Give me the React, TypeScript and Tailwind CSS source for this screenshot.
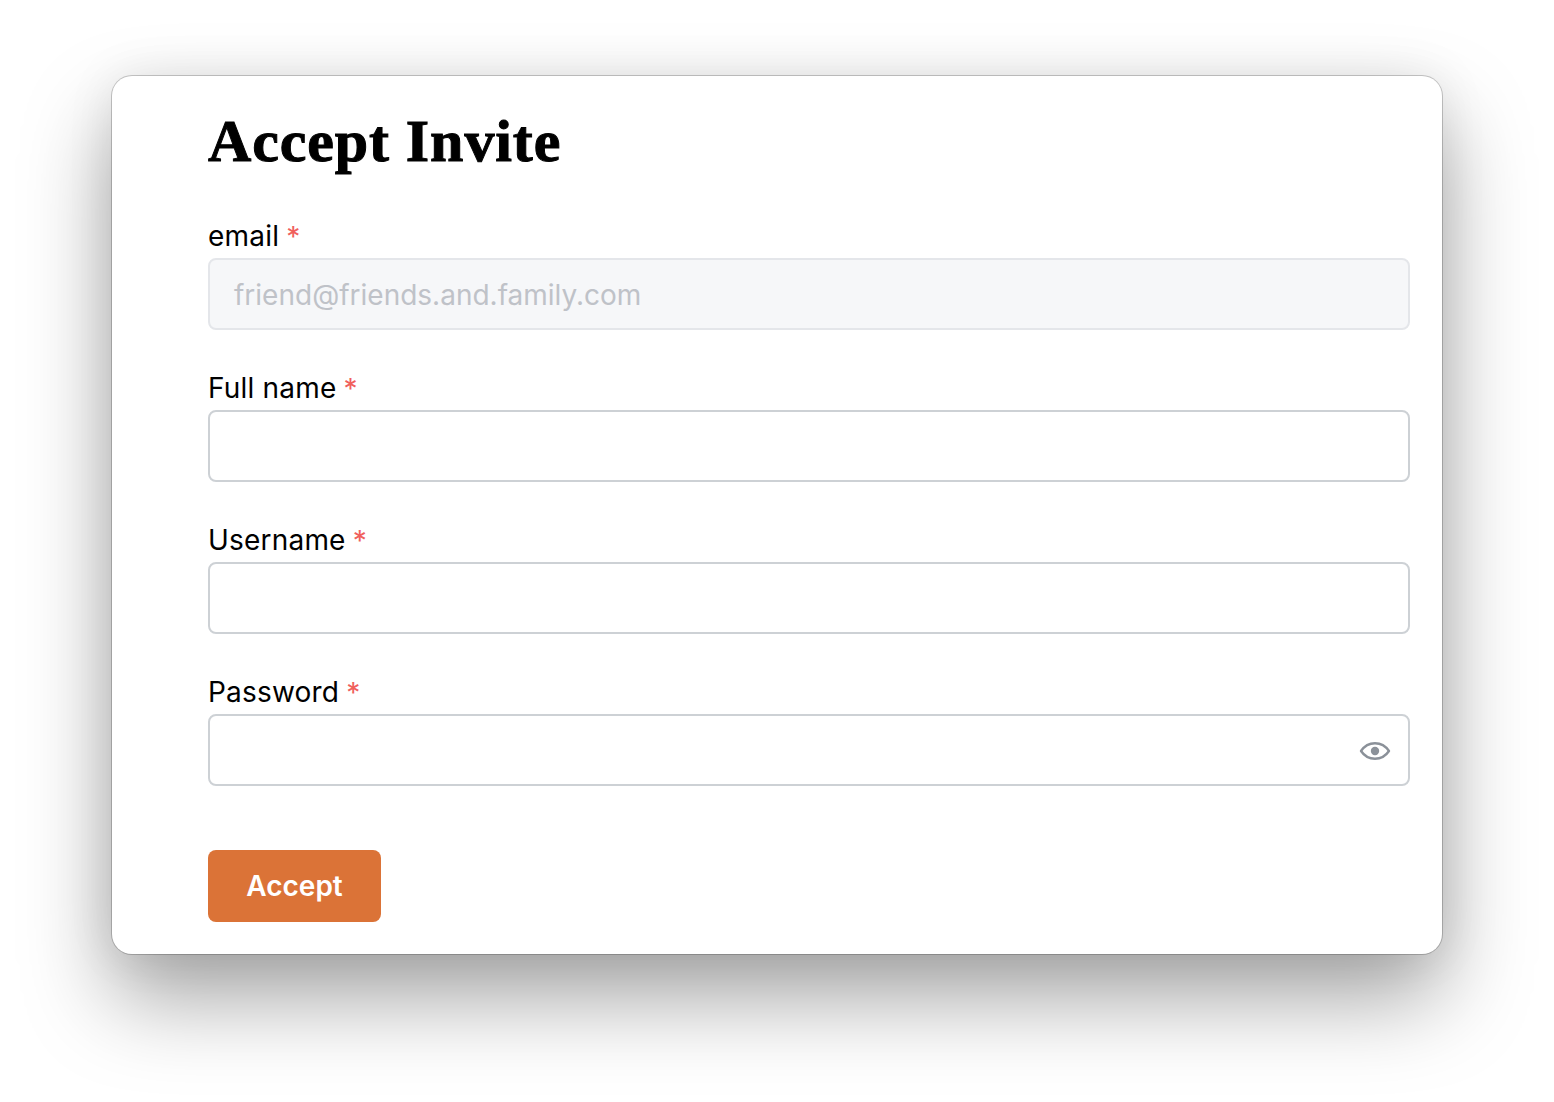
import React from "react";

function Field({ label, disabled, value, eye }: { label: string; disabled?: boolean; value?: string; eye?: boolean }) {
  return (
    <div className="flex flex-col">
      <div className="flex h-[34px] items-center text-[28px] leading-[34px] tracking-[0.2px] text-black">
        <span>{label}</span>
        <span className="ml-[7px] mt-[2px] text-[#f0605c]">*</span>
      </div>
      <div
        className={`relative mt-[5px] flex h-[72px] items-center rounded-[8px] border-2 px-[24px] ${
          disabled ? "border-[#e4e6ea] bg-[#f6f7f9]" : "border-[#cdd1d5] bg-white"
        }`}
      >
        <span className="pt-[2px] text-[28px] text-[#bfc2c8]">{value}</span>
        {eye && (
          <svg className="absolute right-[17px] top-[19px]" width="32" height="32" viewBox="0 0 32 32" fill="none">
            <path
              d="M2 16C5.5 10.8 10.2 8.2 16 8.2S26.5 10.8 30 16C26.5 21.2 21.8 23.8 16 23.8S5.5 21.2 2 16Z"
              stroke="#8b9199"
              strokeWidth="2.4"
              strokeLinejoin="round"
            />
            <circle cx="16" cy="16" r="4.2" fill="#8b9199" />
          </svg>
        )}
      </div>
    </div>
  );
}

export default function App() {
  return (
    <div className="h-[1102px] w-full overflow-hidden bg-white pl-[112px] pr-[112px] pt-[76px] font-['Inter',sans-serif]">
      <div className="h-[878px] w-[1330px] rounded-[20px] bg-white pl-[96px] pr-[32px] shadow-[0_0_0_1px_rgba(0,0,0,0.2),0_44px_88px_rgba(0,0,0,0.36),0_0_50px_rgba(0,0,0,0.08)]">
        <h1 className="flex h-[132px] items-center pb-[3px] font-['Liberation_Serif',serif] text-[60px] font-bold leading-none tracking-[0.9px] text-black [-webkit-text-stroke:1px_black]">
          Accept Invite
        </h1>
        <div className="flex flex-col gap-[41px] pt-[11px]">
          <Field label="email" disabled value="friend@friends.and.family.com" />
          <Field label="Full name" />
          <Field label="Username" />
          <Field label="Password" eye />
        </div>
        <button className="mt-[64px] flex h-[72px] w-[173px] items-center justify-center rounded-[8px] bg-[#db7337] text-[28px] font-semibold text-white">
          Accept
        </button>
      </div>
    </div>
  );
}
